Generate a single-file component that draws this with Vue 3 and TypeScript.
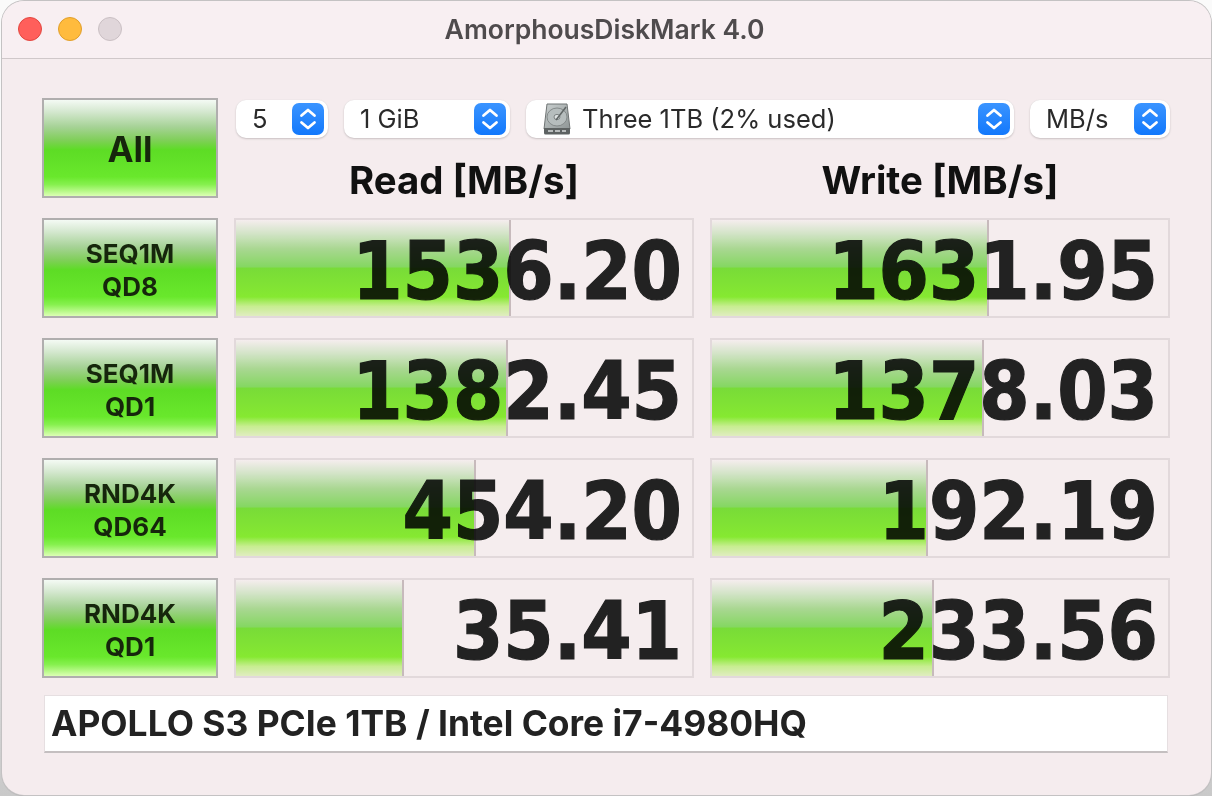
<template>
  <div class="window">
    <header class="titlebar">
      <div class="lights">
        <span class="light red"></span>
        <span class="light yellow"></span>
        <span class="light grey"></span>
      </div>
      <h1>AmorphousDiskMark 4.0</h1>
    </header>

    <main class="content">
      <div class="grid">
        <button class="run all">All</button>

        <div class="top-cell">
          <div class="selects">
            <div v-for="s in selects" :key="s.label" class="select" :class="s.cls">
              <svg v-if="s.disk" class="disk" viewBox="0 0 30 32">
                <defs>
                  <linearGradient id="diskBody" x1="0" y1="0" x2="1" y2="1">
                    <stop offset="0" stop-color="#c9cfcf" />
                    <stop offset="1" stop-color="#8f9696" />
                  </linearGradient>
                </defs>
                <path d="M5 1h20l3 25H2z" fill="url(#diskBody)" stroke="#6f7474" />
                <path d="M2 25h26v5a1.500 1.500 0 0 1-1.500 1.500h-23A1.500 1.500 0 0 1 2 30z" fill="#5d6262" />
                <path d="M6 27h5v2H6zM13 27h5v2h-5zM20 27h4v2h-4z" fill="#b9bdbd" />
                <ellipse cx="15" cy="14" rx="10" ry="9" fill="#b6bdbd" stroke="#858b8b" />
                <ellipse cx="15" cy="14" rx="3" ry="2.600" fill="#dfe3e3" stroke="#7b8181" />
                <path d="M24 4 14 17" stroke="#5f6565" stroke-width="1.500" fill="none" />
              </svg>
              <span class="select-label">{{ s.label }}</span>
              <span class="stepper">
                <svg viewBox="0 0 32 32" width="32" height="32">
                  <path d="M9.500 12.500 16 7l6.500 5.500M9.500 19.500 16 25l6.500-5.500" fill="none" stroke="#fff" stroke-width="2.800" stroke-linecap="round" stroke-linejoin="round" />
                </svg>
              </span>
            </div>
          </div>
          <div class="heads">
            <div class="head">Read [MB/s]</div>
            <div class="head">Write [MB/s]</div>
          </div>
        </div>

        <template v-for="r in rows" :key="r.name + r.queue">
          <button class="run">{{ r.name }}<br />{{ r.queue }}</button>
          <div class="meter">
            <span class="value">{{ r.read.toFixed(2) }}</span>
            <span class="bar" :style="{ width: barWidth(r.read) }"></span>
          </div>
          <div class="meter">
            <span class="value">{{ r.write.toFixed(2) }}</span>
            <span class="bar" :style="{ width: barWidth(r.write) }"></span>
          </div>
        </template>
      </div>

      <div class="comment">APOLLO S3 PCIe 1TB / Intel Core i7-4980HQ</div>
    </main>
  </div>
</template>

<script setup lang="ts">
const selects = [
  { label: '5', cls: 'count' },
  { label: '1 GiB', cls: 'size' },
  { label: 'Three 1TB (2% used)', cls: 'drive', disk: true },
  { label: 'MB/s', cls: 'unit' },
]

const rows = [
  { name: 'SEQ1M', queue: 'QD8', read: 1536.2, write: 1631.95 },
  { name: 'SEQ1M', queue: 'QD1', read: 1382.45, write: 1378.03 },
  { name: 'RND4K', queue: 'QD64', read: 454.2, write: 192.19 },
  { name: 'RND4K', queue: 'QD1', read: 35.41, write: 233.56 },
]

// bars are on a log scale, fitted against the real app
function barWidth(v: number): string {
  return (66.7 + 65.4 * Math.log10(v)) + 'px'
}
</script>

<style>
html, body { margin: 0; height: 100%; background: linear-gradient(#fafafa, #fafafa 50%, #c9c9c9); overflow: hidden; }
</style>

<style scoped>
.window { box-sizing: border-box; width: 1209px; height: 794px; margin: 1px 0 0 2px; background: #f5ecee; border-radius: 22px; box-shadow: 0 0 0 1px #c4c2c3, 0 1px 1px #9a9a9a; overflow: hidden; font-family: Inter, "Liberation Sans", sans-serif; color: #222; }
.titlebar { height: 57px; display: flex; align-items: center; justify-content: center; position: relative; background: #f8eff2; border-bottom: 1px solid #d0c8ca; }
h1 { margin: -2px 4px 0 0; font-size: 26.500px; font-weight: 600; color: #4f4b4d; }
.lights { position: absolute; left: 16px; top: 16px; display: flex; gap: 16px; }
.light { width: 24px; height: 24px; box-sizing: border-box; border-radius: 50%; border: 1px solid; }
.red { background: #ff5f5b; border-color: #e2463f; }
.yellow { background: #ffbb3d; border-color: #e09e2a; }
.grey { background: #e0d6da; border-color: #c9bfc3; }

.content { padding: 39px 40px 0; }
.grid { display: grid; grid-template-columns: 176px 460px 460px; grid-auto-rows: 100px; column-gap: 16px; row-gap: 20px; }

.run { box-sizing: border-box; padding: 4px 0 0; border: 2px solid #b0aeae; font-family: inherit; font-size: 26px; font-weight: 700; line-height: 33px; color: #16260c; background: linear-gradient(#f4faf4 0%, #d5e8d0 12%, #a6d296 28%, #7fcf58 42%, #5ddc25 52%, #69e82c 80%, #86f04e 88%, #dcffb4 100%); }
.all { font-size: 35px; padding-top: 2px; }

.top-cell { grid-column: 2 / 4; display: flex; flex-direction: column; }
.selects { display: flex; gap: 16px; padding: 2px 0 0 2px; }
.select { box-sizing: border-box; height: 38px; display: flex; align-items: center; padding: 0 4px 0 16px; background: #fff; border-radius: 10px; box-shadow: 0 1px 2px #c9c0c2, 0 0 1px #ddd; font-size: 25.500px; color: #2a2a2a; }
.count { width: 92px; }
.size { width: 166px; }
.drive { width: 488px; }
.unit { width: 140px; }
.select-label { flex: 1; margin-top: -1px; }
.disk { width: 30px; height: 32px; margin-right: 10px; }
.stepper { width: 32px; height: 32px; border-radius: 7px; background: linear-gradient(#3a94ff, #1278fc); }
.stepper svg { display: block; }

.heads { display: grid; grid-template-columns: 460px 460px; column-gap: 16px; margin-top: 20px; }
.head { text-align: center; font-size: 38.400px; font-weight: 700; line-height: 44px; color: #111; }

.meter { box-sizing: border-box; position: relative; border: 2px solid #e2d9db; background: #f5edee; display: flex; align-items: center; justify-content: flex-end; padding: 7px 10px 0 0; }
.value { font-family: "DejaVu Sans", sans-serif; font-stretch: condensed; font-weight: 700; font-size: 80.500px; line-height: 1; color: #222; -webkit-text-stroke: 1.200px #222; }
.bar { box-sizing: border-box; position: absolute; left: 0; top: 0; bottom: 0; border-right: 2px solid #cfc8ca; mix-blend-mode: multiply; background: linear-gradient(#ffffff 0%, #dcf6d6 14%, #b0e89c 30%, #8ae868 49%, #7dec3c 50%, #8bfb34 80%, #d0ff9b 90%, #e9ffce 100%); }

.comment { box-sizing: border-box; width: 1124px; height: 58px; margin: 17px 0 0 2px; padding-left: 6px; display: flex; align-items: center; background: #fff; border: 1px solid #e6dfe1; border-bottom: 2px solid #c4bfc0; font-size: 35.400px; font-weight: 700; color: #222; }
</style>
